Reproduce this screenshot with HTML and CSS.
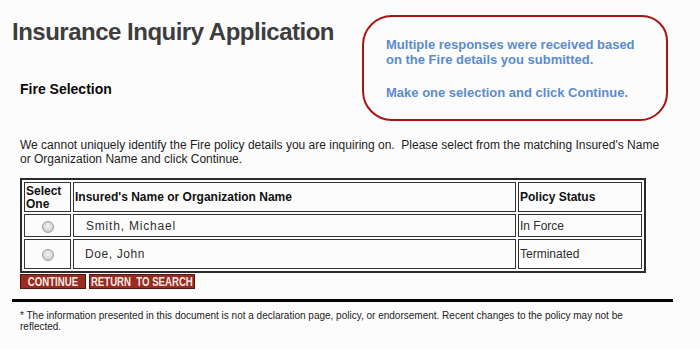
FILE: index.html
```html
<!DOCTYPE html>
<html>
<head>
<meta charset="utf-8">
<title>Insurance Inquiry Application</title>
<link rel="stylesheet" href="styles.css">
</head>
<body>
<div class="page">
  <header class="header">
    <div class="header-left">
      <h1 class="title">Insurance Inquiry Application</h1>
      <h2 class="subtitle">Fire Selection</h2>
    </div>
    <div class="callout">
      <p class="callout-line">Multiple responses were received based<br>on the Fire details you submitted.</p>
      <p class="callout-line callout-gap">Make one selection and click Continue.</p>
    </div>
  </header>

  <section class="content">
    <p class="intro">We cannot uniquely identify the Fire policy details you are inquiring on.&nbsp; Please select from the matching Insured's Name or Organization Name and click Continue.</p>

    <table class="results">
      <tr class="row-head">
        <th class="col-select">Select One</th>
        <th class="col-name">Insured's Name or Organization Name</th>
        <th class="col-status">Policy Status</th>
      </tr>
      <tr class="row-1">
        <td class="cell-radio"><input type="radio" name="pick" class="radio"></td>
        <td class="cell-name"><span class="name name-wide">Smith, Michael</span></td>
        <td class="cell-status">In Force</td>
      </tr>
      <tr class="row-2">
        <td class="cell-radio"><input type="radio" name="pick" class="radio"></td>
        <td class="cell-name"><span class="name">Doe, John</span></td>
        <td class="cell-status">Terminated</td>
      </tr>
    </table>

    <div class="buttons">
      <button class="btn btn-continue"><span class="btn-label">CONTINUE</span></button>
      <button class="btn btn-return"><span class="btn-label">RETURN&nbsp; TO SEARCH</span></button>
    </div>
  </section>

  <hr class="rule">

  <p class="footnote">* The information presented in this document is not a declaration page, policy, or endorsement. Recent changes to the policy may not be reflected.</p>
</div>
</body>
</html>
```
FILE: styles.css
```css
html, body {
  margin: 0;
  padding: 0;
  background: #fcfcfc;
}
body {
  font-family: "Liberation Sans", Arial, sans-serif;
  color: #1e1e1e;
}
.page {
  padding: 0 0 0 12px;
  width: 661px;
}
.header {
  display: flex;
  align-items: flex-start;
  padding-top: 15px;
}
.header-left {
  width: 350px;
}
.title {
  margin: 3px 0 0 0;
  font-size: 24px;
  line-height: 28px;
  font-weight: bold;
  letter-spacing: -0.5px;
  color: #3d3d3d;
}
.subtitle {
  margin: 35px 0 0 8px;
  font-size: 14px;
  line-height: 16px;
  font-weight: bold;
  color: #0a0a0a;
}
.callout {
  box-sizing: border-box;
  width: 306px;
  height: 106px;
  border: 2px solid #a81414;
  border-radius: 30px 26px 28px 30px;
  padding: 20px 0 0 22px;
  color: #5b8bcd;
  font-size: 13px;
  font-weight: bold;
  line-height: 15px;
}
.callout-line {
  margin: 0;
}
.callout-gap {
  margin-top: 18px;
}
.content {
  padding-left: 8px;
}
.intro {
  margin: 17px 0 0 0;
  font-size: 12px;
  line-height: 14px;
  color: #1e1e1e;
  width: 650px;
}
.results {
  margin-top: 12px;
  border: 2px solid #2b2b2b;
  border-spacing: 2px;
  width: 626px;
  font-size: 12px;
}
.results th, .results td {
  border: 1px solid #333;
  padding: 0 1px;
  text-align: left;
  vertical-align: middle;
}
.results th {
  font-weight: bold;
  color: #111;
  line-height: 13px;
}
.row-head th { height: 28px; }
.row-1 td { height: 21px; }
.row-2 td { height: 28px; }
.col-select {
  width: 47px;
  box-sizing: border-box;
  vertical-align: top !important;
  padding-top: 2px !important;
}
.col-name { width: 439px; }
.cell-radio { text-align: center !important; }
.cell-name, .cell-status { color: #2e2e2e; }
.name {
  padding-left: 10px;
  letter-spacing: 0.6px;
}
.name-wide { letter-spacing: 0.8px; padding-left: 11px; }
.radio {
  appearance: none;
  -webkit-appearance: none;
  width: 12px;
  height: 12px;
  margin: 2px 0 0 0;
  border: 1px solid #9a9a9a;
  border-radius: 50%;
  background: radial-gradient(circle at 50% 40%, #f2f2f2 0%, #d8d8d8 55%, #bdbdbd 100%);
  vertical-align: middle;
}
.buttons {
  display: flex;
  gap: 3px;
  margin-top: 1px;
}
.btn {
  box-sizing: border-box;
  height: 15px;
  padding: 0;
  border: 1px solid #4e1712;
  background: #9b2a21;
  color: #f6ebe8;
  font-family: "Liberation Sans", Arial, sans-serif;
  font-weight: bold;
  font-size: 13px;
  line-height: 13px;
  text-align: center;
  white-space: nowrap;
  overflow: hidden;
  display: flex;
  align-items: center;
  justify-content: center;
}
.btn-label {
  display: inline-block;
  transform: scaleX(0.74);
  transform-origin: center;
  white-space: nowrap;
}
.btn-continue { width: 66px; }
.btn-return { width: 106px; }
.rule {
  margin: 10px 0 0 0;
  border: 0;
  height: 3px;
  background: #050505;
  width: 661px;
}
.footnote {
  margin: 8px 0 0 8px;
  font-size: 10px;
  line-height: 11px;
  color: #222;
  width: 620px;
}
```
